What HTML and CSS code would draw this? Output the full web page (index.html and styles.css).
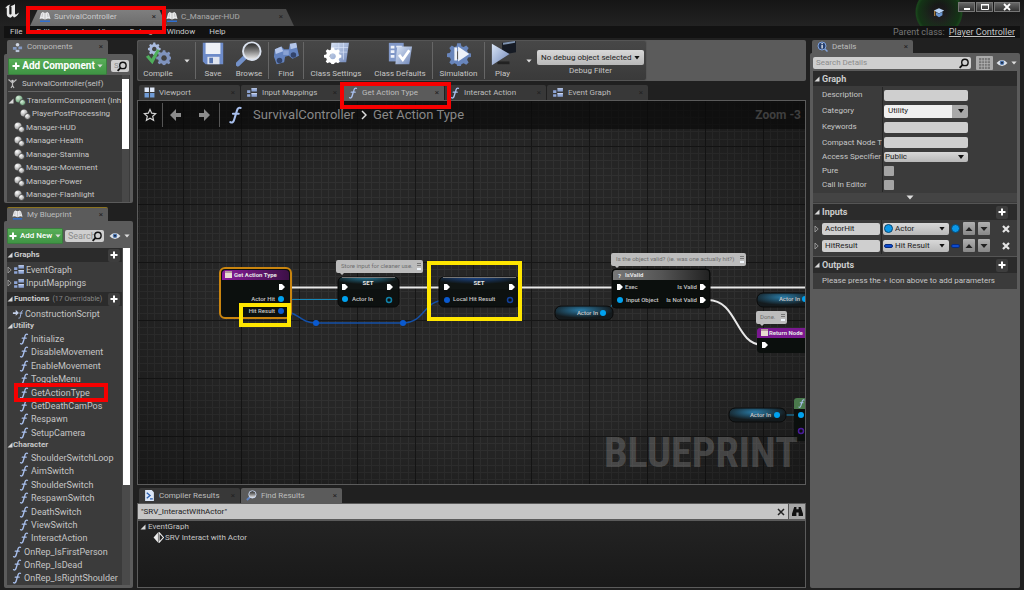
FILE: index.html
```html
<!DOCTYPE html>
<html lang="en">
<head>
<meta charset="utf-8">
<title>SurvivalController</title>
<link rel="stylesheet" href="styles.css">
</head>
<body>
<svg class="defs" aria-hidden="true">
  <defs>
    <linearGradient id="steel" x1="0" y1="0" x2="1" y2="1"><stop offset="0" stop-color="#dbe6f7"/><stop offset="1" stop-color="#6f86b8"/></linearGradient>
    <linearGradient id="lens" x1="0" y1="0" x2="0" y2="1"><stop offset="0" stop-color="#222"/><stop offset=".45" stop-color="#777"/><stop offset="1" stop-color="#f4f4f4"/></linearGradient>
    <radialGradient id="ball" cx=".35" cy=".3" r=".8"><stop offset="0" stop-color="#fff"/><stop offset="1" stop-color="#8b8b8b"/></radialGradient>
    <radialGradient id="greenball" cx=".35" cy=".3" r=".8"><stop offset="0" stop-color="#d9f0dd"/><stop offset="1" stop-color="#5d9a6c"/></radialGradient>
  </defs>
  <symbol id="i-book" viewBox="0 0 12 11"><path d="M1 9.500h10v1.500H1z" fill="#2f6fd0"/><path d="M2 2.500 3.500 1l2.500 1 2.500-1L10 2.500l1.500 5.500-2.500-.5-3 1-3-1L.5 8z" fill="#e9eaec"/><path d="M6 2v6M3.500 2.500 3 6M8.500 2.500 9 6" stroke="#aaa" stroke-width=".6"/></symbol>
  <symbol id="i-f" viewBox="0 0 10 14"><path d="M1 12.500c1.500.8 2.500 0 3-2L6 4c.5-2 1.500-3 3-2.500M3 6h4.500" fill="none" stroke="#a9c0ee" stroke-width="1.600" stroke-linecap="round"/></symbol>
  <symbol id="i-graph" viewBox="0 0 11 10"><path d="M5 1h5v3H5zM5 5.500h5v3.500H5zM1 3h3v2.500H1zM1 6.500h3V9H1z" fill="#8ea5d6"/><path d="M5 1h5v1H5zM5 5.500h5v1H5z" fill="#c6d3ee"/></symbol>
  <symbol id="i-view" viewBox="0 0 10 10"><path d="M.5.5h4v4h-4zM5.500.5h4v4h-4z" fill="#dfe8f8"/><path d="M.5 5.500h4v4h-4zM5.500 5.500h4v4h-4z" fill="#6f9bd6"/></symbol>
  <symbol id="i-comp" viewBox="0 0 11 11"><circle cx="4" cy="4" r="3.500" fill="url(#ball)"/><circle cx="7.500" cy="7.500" r="3" fill="url(#ball)" stroke="#3c3c3c" stroke-width=".8"/></symbol>
  <symbol id="i-trans" viewBox="0 0 11 11"><circle cx="4" cy="4" r="3.500" fill="url(#greenball)"/><circle cx="7.500" cy="7.500" r="3" fill="url(#greenball)" stroke="#3c3c3c" stroke-width=".8"/></symbol>
  <symbol id="i-self" viewBox="0 0 10 11"><circle cx="5" cy="3" r="1.300" fill="#ccc"/><path d="M1 1.500 5 5l4-3.500M5 5v2.500L3.500 10M5 7.500 6.500 10" stroke="#bbb" stroke-width="1.200" fill="none"/></symbol>
  <symbol id="i-parts" viewBox="0 0 12 11"><circle cx="6" cy="2.500" r="2" fill="#d0d6e2"/><path d="M1 5h4v3H1zM7 4.500h4v3H7z" fill="#8498c0"/><path d="M4 8h4v2.500H4z" fill="#b9c4d8"/></symbol>
  <symbol id="i-search" viewBox="0 0 12 12"><circle cx="7" cy="4.800" r="3.500" fill="none" stroke="#111" stroke-width="1.500"/><path d="M4.500 7.500 1.200 10.800" stroke="#111" stroke-width="2"/></symbol>
  <symbol id="i-eye" viewBox="0 0 12 8"><path d="M.5 4Q6-2 11.500 4 6 10 .5 4z" fill="#e2e6ec"/><circle cx="6" cy="3.800" r="2.300" fill="#5078b0"/><circle cx="6" cy="3.800" r="1" fill="#152238"/></symbol>
  <symbol id="i-plus" viewBox="0 0 8 8"><path d="M3 .5h2V3h2.500v2H5v2.500H3V5H.5V3H3z" fill="#fff"/></symbol>
  <symbol id="i-open" viewBox="0 0 6 6"><path d="M5.500.5v5H.5z" fill="#d8d8d8"/></symbol>
  <symbol id="i-closed" viewBox="0 0 5 8"><path d="M1 1v6l3.200-3z" fill="none" stroke="#aaa" stroke-width=".8"/></symbol>
  <symbol id="i-down" viewBox="0 0 8 5"><path d="M.5.500h7L4 4.500z" fill="currentColor"/></symbol>
  <symbol id="i-gear" viewBox="0 0 20 20"><path d="M8.500 1h3l.5 2.500 1.800.8L16 3l2 2-1.300 2.200.8 1.800 2.500.5v3l-2.500.5-.8 1.800L18 17l-2 2-2.200-1.300-1.800.8-.5 1.500h-3L8 18.500l-1.800-.8L4 19l-2-2 1.300-2.200-.8-1.800L0 12.500v-3L2.500 9l.8-1.800L2 5l2-2 2.200 1.300L8 3.500zM10 7.500a3.500 3.500 0 1 0 .01 0z" fill-rule="evenodd"/></symbol>
  <symbol id="i-glass" viewBox="0 0 12 12"><path d="M4.500 7.500 1 11" stroke="#5f84c4" stroke-width="2.200"/><circle cx="7" cy="4.800" r="4" fill="url(#lens)" stroke="#c6d4ee" stroke-width="1"/></symbol>
</svg>

<header class="titlebar">
  <svg class="logo" viewBox="0 0 16 16" aria-label="Engine logo"><path d="M1 5.500C2.500 3 4 2 6.500 1.500 5.500 2.500 5.300 3 5.300 4v6.500c0 1 1.200 1.500 2.200.5V4.500C7.500 3.500 7 3.400 6.500 3.200 8.500 2.600 9.800 2 11 1v9.500c0 1 .8 1.300 1.500.8L15 9.500c-1 3-3.500 4.500-5 5L8.700 13l-2 1.800C4 14.500 2.800 13 2.800 11V5.500C2.800 4.500 2 4.600 1 5.500z" fill="#e8e8e8"/></svg>
  <nav class="windows">
    <a class="wtab active" href="#"><svg class="ic12"><use href="#i-book"/></svg><span>SurvivalController</span><i class="x">×</i><b class="mark mark-window"></b></a>
    <a class="wtab" href="#"><svg class="ic12"><use href="#i-book"/></svg><span>C_Manager-HUD</span><i class="x">×</i></a>
  </nav>
  <div class="tutorial"><svg viewBox="0 0 14 14"><path d="M1 4 7 1.500 13 4 7 7.500z" fill="#b9d3f5"/><path d="M3.500 6v3.500L7 12l4-2.500V5.500L7 8z" fill="#6b96d0"/><path d="M2 4.500v6" stroke="#c89446" stroke-width="1.200"/></svg></div>
  <div class="winbtns">
    <button aria-label="Minimize"><svg viewBox="0 0 10 8"><path d="M2 5h6v2H2z" fill="#fff"/></svg></button>
    <button aria-label="Maximize"><svg viewBox="0 0 10 8"><path d="M1.500 1.500h7v5h-7z" fill="none" stroke="#fff"/><path d="M1 1h8v1.500H1z" fill="#fff"/></svg></button>
    <button class="wide" aria-label="Close"><svg viewBox="0 0 10 8"><path d="m2 1 6 6M8 1 2 7" stroke="#fff" stroke-width="1.800"/></svg></button>
  </div>
</header>

<nav class="menubar">
  <a href="#">File</a><a href="#">Edit</a><a href="#">Asset</a><a href="#">View</a><a href="#">Debug</a><a href="#">Window</a><a href="#">Help</a>
  <p>Parent class: <a href="#">Player Controller</a></p>
</nav>

<main>
  <aside class="left">
    <section class="dock components">
      <div class="tab lit"><svg class="ic10"><use href="#i-parts"/></svg><span>Components</span><i class="x">×</i></div>
      <div class="panel">
        <div class="tools">
          <button class="green big"><svg class="ic8"><use href="#i-plus"/></svg>Add Component<svg class="caret"><use href="#i-down"/></svg></button>
          <label class="search tiny"><input type="text" aria-label="Search components" placeholder="S"><svg class="ic12"><use href="#i-search"/></svg></label>
        </div>
        <div class="scroll">
          <div class="inner">
            <div class="self"><svg class="ic10"><use href="#i-self"/></svg>SurvivalController(self)</div>
            <ul class="tree">
              <li class="root"><svg class="ic6"><use href="#i-open"/></svg><svg class="ic10"><use href="#i-trans"/></svg>TransformComponent (Inh</li>
              <li class="child"><svg class="ic10"><use href="#i-comp"/></svg>PlayerPostProcessing</li>
              <li><svg class="ic10"><use href="#i-comp"/></svg>Manager-HUD</li>
              <li><svg class="ic10"><use href="#i-comp"/></svg>Manager-Health</li>
              <li><svg class="ic10"><use href="#i-comp"/></svg>Manager-Stamina</li>
              <li><svg class="ic10"><use href="#i-comp"/></svg>Manager-Movement</li>
              <li><svg class="ic10"><use href="#i-comp"/></svg>Manager-Power</li>
              <li><svg class="ic10"><use href="#i-comp"/></svg>Manager-Flashlight</li>
            </ul>
          </div>
          <div class="bar"><div class="thumb short"></div></div>
        </div>
      </div>
    </section>

    <section class="dock blueprint">
      <div class="tab lit gold"><svg class="ic10"><use href="#i-book"/></svg><span>My Blueprint</span><i class="x">×</i></div>
      <div class="panel">
        <div class="tools">
          <button class="green"><svg class="ic8"><use href="#i-plus"/></svg>Add New<svg class="caret"><use href="#i-down"/></svg></button>
          <label class="search small"><input type="text" aria-label="Search blueprint" placeholder="Search"><svg class="ic12"><use href="#i-search"/></svg></label>
          <button class="eye" aria-label="View options"><svg class="eyeic"><use href="#i-eye"/></svg><svg class="caret"><use href="#i-down"/></svg></button>
        </div>
        <div class="scroll">
          <div class="inner">
            <h3><svg class="ic6"><use href="#i-open"/></svg>Graphs<button aria-label="Add graph"><svg class="ic8"><use href="#i-plus"/></svg></button></h3>
            <ul class="list graphs">
              <li><svg class="closed"><use href="#i-closed"/></svg><svg class="ic12"><use href="#i-graph"/></svg>EventGraph</li>
              <li><svg class="closed"><use href="#i-closed"/></svg><svg class="ic12"><use href="#i-graph"/></svg>InputMappings</li>
            </ul>
            <h3><svg class="ic6"><use href="#i-open"/></svg>Functions<small>(17 Overridable)</small><button aria-label="Add function"><svg class="ic8"><use href="#i-plus"/></svg></button></h3>
            <ul class="list funcs">
              <li class="con"><svg class="conic" viewBox="0 0 13 12"><path d="M1 6V4h3V1.500L7.500 5 4 8V6z" fill="#c3cfe8"/><path d="M7 10.500c1 .5 1.500 0 2-1.500l1-5c.3-1.200 1-1.800 2-1.400M8 5h3.500" fill="none" stroke="#a9c0ee"/></svg>ConstructionScript</li>
              <li class="cat"><svg class="ic6"><use href="#i-open"/></svg>Utility</li>
              <li class="sub"><svg class="fn"><use href="#i-f"/></svg>Initialize</li>
              <li class="sub"><svg class="fn"><use href="#i-f"/></svg>DisableMovement</li>
              <li class="sub"><svg class="fn"><use href="#i-f"/></svg>EnableMovement</li>
              <li class="sub"><svg class="fn"><use href="#i-f"/></svg>ToggleMenu</li>
              <li class="sub marked"><svg class="fn"><use href="#i-f"/></svg>GetActionType<b class="mark mark-row"></b></li>
              <li class="sub"><svg class="fn"><use href="#i-f"/></svg>GetDeathCamPos</li>
              <li class="sub"><svg class="fn"><use href="#i-f"/></svg>Respawn</li>
              <li class="sub"><svg class="fn"><use href="#i-f"/></svg>SetupCamera</li>
              <li class="cat"><svg class="ic6"><use href="#i-open"/></svg>Character</li>
              <li class="sub"><svg class="fn"><use href="#i-f"/></svg>ShoulderSwitchLoop</li>
              <li class="sub"><svg class="fn"><use href="#i-f"/></svg>AimSwitch</li>
              <li class="sub"><svg class="fn"><use href="#i-f"/></svg>ShoulderSwitch</li>
              <li class="sub"><svg class="fn"><use href="#i-f"/></svg>RespawnSwitch</li>
              <li class="sub"><svg class="fn"><use href="#i-f"/></svg>DeathSwitch</li>
              <li class="sub"><svg class="fn"><use href="#i-f"/></svg>ViewSwitch</li>
              <li class="sub"><svg class="fn"><use href="#i-f"/></svg>InteractAction</li>
              <li class="top"><svg class="fn"><use href="#i-f"/></svg>OnRep_IsFirstPerson</li>
              <li class="top"><svg class="fn"><use href="#i-f"/></svg>OnRep_IsDead</li>
              <li class="top"><svg class="fn"><use href="#i-f"/></svg>OnRep_IsRightShoulder</li>
            </ul>
          </div>
          <div class="bar"><div class="thumb tall"></div></div>
        </div>
      </div>
    </section>
  </aside>

  <div class="center">
    <div class="toolstrip">
      <div class="toolbar">
        <button class="w40"><svg viewBox="0 0 28 28"><use href="#i-gear" x="3" y="1" width="14" height="14" fill="#a9bbdf"/><use href="#i-gear" x="12" y="9" width="17" height="17" fill="#7f93bd"/><path d="m1 17 3-2 3 4L13 9l3 1-8 15z" fill="#4fae5c"/></svg>Compile</button>
        <button class="drop" aria-label="Compile options"><svg class="caret"><use href="#i-down"/></svg></button>
        <i class="sep"></i>
        <button class="w34"><svg viewBox="0 0 28 28"><path d="M3 2h22v23H6l-3-3z" fill="#6d8bc9"/><path d="M6 2h16v12H6z" fill="#edf0f6"/><path d="M8 17h13v8H8z" fill="#dfe4ee"/><path d="M10 18h4v6h-4z" fill="#5673ad"/></svg>Save</button>
        <button class="w37"><svg viewBox="0 0 28 28"><path d="M10 17 2 25" stroke="#7391c9" stroke-width="5" stroke-linecap="round"/><circle cx="17" cy="11" r="9.500" fill="url(#lens)" stroke="#dbe2ee" stroke-width="2"/></svg>Browse</button>
        <i class="sep"></i>
        <button class="w34"><svg viewBox="0 0 28 28"><path d="m2 9 7-3 3 3h5l1-5 7-1 3 13-7 3-4-3-4 1-1 6-8 2-3-8z" fill="#6483bf"/><path d="m2 9 7-3 2 5-8 3zM18 3l7-1 1 5-7 2z" fill="#b4c6ea"/><path d="M11 10h6v5h-6z" fill="#89a2d4"/><circle cx="7" cy="21" r="3" fill="#33446b"/><circle cx="22" cy="15" r="3" fill="#33446b"/></svg>Find</button>
        <i class="sep"></i>
        <button class="w64"><svg viewBox="0 0 28 28"><path d="M9 2h19l-3 21H7z" fill="url(#steel)"/><path d="M12 7h15M12 12h14M17 2v18M22 2v18" stroke="#dae5fa" stroke-width=".7"/><use href="#i-gear" x="1" y="6" width="19" height="19" fill="#fff"/></svg>Class Settings</button>
        <button class="w64"><svg viewBox="0 0 28 28"><path d="M2 2h16v20H2z" fill="#8198c8"/><path d="M4 5h4v3H4zM4 10h4v3H4zM4 15h4v3H4zM10 5h6v2h-6z" fill="#eef2fa"/><path d="M11 6h16l-3 19H9z" fill="url(#steel)"/><path d="m13 15 4 5 7-10" fill="none" stroke="#fff" stroke-width="3"/></svg>Class Defaults</button>
        <i class="sep"></i>
        <button class="w51"><svg viewBox="0 0 28 28"><use href="#i-gear" x="1" y="1" width="26" height="26" fill="#6885bb"/><path d="M9 7h3v14H9zM13 6l12 8-12 8z" fill="#edf1f8"/></svg>Simulation</button>
        <i class="sep"></i>
        <button class="w35"><svg viewBox="0 0 28 28"><path d="M13 2 28 0v12l-15 3z" fill="#161b24"/><path d="m14 2 13-2v2L14 4z" fill="#7f93b0"/><path d="M8 22h13v3H8z" fill="#222"/><path d="M2 3v23l19-12z" fill="url(#steel)"/></svg>Play</button>
        <button class="drop" aria-label="Play options"><svg class="caret"><use href="#i-down"/></svg></button>
        <div class="debug">
          <span class="select"><select id="debug"><option>No debug object selected</option></select></span>
          <label for="debug">Debug Filter</label>
        </div>
      </div>
    </div>

    <div class="tabs doc">
      <div class="tab"><svg class="ic10"><use href="#i-view"/></svg><span>Viewport</span><i class="x">×</i></div>
      <div class="tab"><svg class="ic12"><use href="#i-graph"/></svg><span>Input Mappings</span><i class="x">×</i></div>
      <div class="tab lit"><svg class="fn"><use href="#i-f"/></svg><span>Get Action Type</span><i class="x">×</i><b class="mark mark-doc"></b></div>
      <div class="tab"><svg class="fn"><use href="#i-f"/></svg><span>Interact Action</span><i class="x">×</i></div>
      <div class="tab"><svg class="ic12"><use href="#i-graph"/></svg><span>Event Graph</span><i class="x">×</i></div>
    </div>

    <section class="graph">
      <svg class="canvas">
        <defs>
          <pattern id="grid" x="45" y="45" width="58" height="58" patternUnits="userSpaceOnUse">
            <path d="M7.500 0v58M14.500 0v58M22.500 0v58M29.500 0v58M36.500 0v58M43.500 0v58M51.500 0v58M0 7.500h58M0 14.500h58M0 22.500h58M0 29.500h58M0 36.500h58M0 43.500h58M0 51.500h58" stroke="#303030"/>
            <path d="M.5 0v58M0 .5h58" stroke="#161616"/>
          </pattern>
          <radialGradient id="vig" cx=".5" cy=".5" r=".75"><stop offset=".5" stop-opacity="0"/><stop offset="1" stop-opacity=".45"/></radialGradient>
          <linearGradient id="purple"><stop offset="0" stop-color="#8a1c9c"/><stop offset="1" stop-color="#3c1046"/></linearGradient>
          <linearGradient id="gray"><stop offset="0" stop-color="#777"/><stop offset=".5" stop-color="#555"/><stop offset="1" stop-color="#222"/></linearGradient>
          <radialGradient id="cyan" cx=".45" cy="0" r=".6"><stop offset="0" stop-color="#247a9c"/><stop offset="1" stop-color="#101514"/></radialGradient>
          <radialGradient id="blue" cx=".45" cy="0" r=".6"><stop offset="0" stop-color="#1c4a94"/><stop offset="1" stop-color="#101514"/></radialGradient>
          <radialGradient id="pill" cx=".45" cy=".3" r=".55"><stop offset="0" stop-color="#2a7ba6"/><stop offset="1" stop-color="#141a1d"/></radialGradient>
          <path id="exec" d="M0-3h3L6 0 3 3H0z" fill="#fff"/>
          <g id="grip"><path d="M0 0h4v1H0zM0 2h4v1H0z" fill="#777"/><path d="M0 5h4v2H0z" fill="#eef4fa"/></g>
          <g id="sheet"><path d="M0 0h7v7H0z" fill="#e8dccf"/><path d="M0 0h7v2H0z" fill="#b49a9f"/></g>
        </defs>
        <rect width="100%" height="100%" fill="url(#grid)"/>
        <rect width="100%" height="100%" fill="url(#vig)"/>
        <g transform="translate(-138 -101)" class="nodes">
          <g fill="none" stroke="#e8e8e8" stroke-width="2">
            <path d="M285 287.500h58M396 287.500h48M517 287.500h100M708 287.500h99M708 300c30 0 27 45 55 45"/>
          </g>
          <path d="M283 299.500h60M603 313c9 0 7-13 17-13M778 415h22" fill="none" stroke="#1687b8" stroke-width="1"/>
          <path d="M283 311c14 0 17 12 33 12h87c22 0 20-23 43-23" fill="none" stroke="#1450a8" stroke-width="1.500"/>
          <circle cx="316" cy="323" r="3" fill="#0a5ad0"/><circle cx="403" cy="323" r="3" fill="#0a5ad0"/>

          <rect x="220" y="268" width="71" height="50" rx="5" fill="#0c100e" stroke="#c98510" stroke-width="2"/>
          <path d="M222 280v-6q0-4 4-4h59q4 0 4 4v6z" fill="url(#purple)"/>
          <use href="#sheet" x="225" y="271"/><text class="b" x="234" y="277">Get Action Type</text>
          <use href="#exec" x="279" y="287"/>
          <text x="275" y="301" class="e">Actor Hit</text><circle cx="281" cy="299" r="3" fill="#00a2f0"/>
          <text x="275" y="313" class="e">Hit Result</text><circle cx="281" cy="311" r="3" fill="#0a5ad0"/>

          <path d="M338 260h83q2 0 2 2v9q0 2-2 2h-77l-2 2-2-2h-2q-2 0-2-2v-9q0-2 2-2z" class="note"/>
          <text class="n" x="341" y="268">Store input for cleaner use.</text><use href="#grip" x="417" y="263"/>
          <rect x="338" y="277" width="61" height="30" rx="5" fill="#0d1110" stroke="#090909"/><path d="M339 289v-7q0-5 5-5h49q5 0 5 5v7z" fill="url(#cyan)"/><path d="M342 277.500h53" stroke="#777"/>
          <text class="b m" x="368" y="285">SET</text>
          <use href="#exec" x="342" y="287"/><use href="#exec" x="387" y="287"/>
          <circle cx="345" cy="299" r="3" fill="#00a2f0"/><text x="352" y="301">Actor In</text><circle cx="389" cy="300" r="2.500" class="ring" stroke="#1183aa"/>

          <rect x="439" y="277" width="81" height="30" rx="5" fill="#0d1110" stroke="#090909"/><path d="M440 289v-7q0-5 5-5h69q5 0 5 5v7z" fill="url(#blue)"/><path d="M443 277.500h73" stroke="#777"/>
          <text class="b m" x="479" y="285">SET</text>
          <use href="#exec" x="444" y="287"/><use href="#exec" x="509" y="287"/>
          <circle cx="447" cy="300" r="3" fill="#0a5ad0"/><text x="453" y="301">Local Hit Result</text><circle cx="510" cy="300" r="2.500" class="ring" stroke="#12409a"/>

          <path d="M613 253h131q2 0 2 2v9q0 2-2 2H619l-2 2-2-2h-2q-2 0-2-2v-9q0-2 2-2z" class="note"/>
          <text class="n" x="616" y="261">Is the object valid? (ie. was one actually hit?)</text><use href="#grip" x="740" y="256"/>
          <rect x="612" y="269" width="98" height="39" rx="4" fill="#0b0f0d" stroke="#090909"/><path d="M613 280v-7q0-3 3-3h90q3 0 3 3v7z" fill="url(#gray)"/>
          <text class="b" x="618" y="278">?</text><text class="b" x="625" y="277">IsValid</text>
          <use href="#exec" x="617" y="287"/><text x="625" y="289">Exec</text><use href="#exec" x="700" y="287"/><text class="e" x="697" y="289">Is Valid</text>
          <circle cx="620" cy="300" r="3" fill="#00a2f0"/><text x="626" y="302">Input Object</text><use href="#exec" x="700" y="300"/><text class="e" x="697" y="302">Is Not Valid</text>

          <rect x="555" y="306" width="58" height="14" rx="6" class="pill"/><text class="e" x="598" y="315">Actor In</text><circle cx="603" cy="313" r="3" fill="#00a2f0"/>
          <rect x="757" y="293" width="58" height="14" rx="6" class="pill"/><text class="e" x="800" y="301">Actor In</text><circle cx="805" cy="299" r="3" fill="#00a2f0"/>

          <path d="M758 311h27q2 0 2 2v9q0 2-2 2h-21l-2 2-2-2h-2q-2 0-2-2v-9q0-2 2-2z" class="note"/>
          <text class="n" x="760" y="319">Done.</text><use href="#grip" x="781" y="314"/>
          <rect x="757" y="328" width="70" height="25" rx="4" fill="#0b0f0d"/><path d="M757 338v-7q0-3 3-3h60v10z" fill="#7a1890"/>
          <use href="#sheet" x="761" y="329"/><text class="b" x="769" y="335">Return Node</text><use href="#exec" x="762" y="345"/>

          <rect x="729" y="408" width="57" height="14" rx="6" class="pill"/><text class="e" x="771" y="417">Actor In</text><circle cx="777" cy="415" r="3" fill="#00a2f0"/>
          <rect x="794" y="398" width="40" height="43" rx="4" fill="#0b0f0d"/><path d="M794 409v-8q0-3 3-3h20v11z" fill="#4a7a4c"/><use href="#i-f" x="798" y="399" width="7" height="9"/>
          <circle cx="801" cy="415" r="3" fill="#00a2f0"/><circle cx="801" cy="431" r="2.500" class="ring" stroke="#4a1c9c"/>

          <rect x="241" y="305" width="48" height="20" class="box"/>
          <rect x="429" y="263" width="91" height="56" class="box"/>
        </g>
      </svg>
      <div class="crumbs">
        <button aria-label="Favorite"><svg class="ic14" viewBox="0 0 14 14"><path d="m7 1.500 1.700 3.700 4 .4-3 2.700.9 4L7 10.200 3.400 12.300l.9-4-3-2.700 4-.4z" fill="none" stroke="#d5d5d5" stroke-width="1.200"/></svg></button>
        <i class="vsep"></i>
        <button aria-label="Back"><svg class="ic14" viewBox="0 0 14 14"><path d="m1 7 6-6v4h5v4H7v4z" fill="#8c8c8c"/></svg></button>
        <button aria-label="Forward"><svg class="ic14" viewBox="0 0 14 14"><path d="M13 7 7 1v4H2v4h5v4z" fill="#8c8c8c"/></svg></button>
        <i class="vsep second"></i>
        <svg class="bigf"><use href="#i-f"/></svg>
        <a href="#">SurvivalController</a><svg class="chev" viewBox="0 0 6 10"><path d="m1 1 4 4-4 4" fill="none" stroke="#ddd" stroke-width="1.500"/></svg><a href="#">Get Action Type</a>
        <strong>Zoom -3</strong>
      </div>
      <div class="watermark">BLUEPRINT</div>
    </section>

    <div class="tabs low">
      <div class="tab"><svg class="ic10" viewBox="0 0 10 10"><path d="M1 0h6l2 2v8H1z" fill="#dce7f8"/><path d="m2.500 2.500 3 2.500-3 2.500M5.500 8H8" fill="none" stroke="#2b5fae" stroke-width="1.200"/></svg><span>Compiler Results</span><i class="x">×</i></div>
      <div class="tab lit"><svg class="ic10"><use href="#i-glass"/></svg><span>Find Results</span><i class="x">×</i></div>
    </div>
    <section class="find">
      <div class="findbar">
        <input type="text" aria-label="Find in blueprint" value='"SRV_InteractWithActor"'>
        <button aria-label="Clear"><svg class="ic8" viewBox="0 0 8 8"><path d="m1 1 6 6M7 1 1 7" stroke="#222" stroke-width="1.500"/></svg></button>
        <button class="bino" aria-label="Find in all blueprints"><svg class="ic10" viewBox="0 0 10 10"><path d="M2 1h2v2h2V1h2l2 6v2H6V6H4v3H0V7z" fill="#111"/></svg></button>
      </div>
      <ul class="results">
        <li><svg class="ic6"><use href="#i-open"/></svg>EventGraph</li>
        <li class="hit"><svg class="ic10" viewBox="0 0 10 10"><path d="M4.500.5v9L.5 5z" fill="#eee"/><path d="M5.500.5v9l4-4.500z" fill="none" stroke="#eee"/></svg>SRV Interact with Actor</li>
      </ul>
    </section>
  </div>

  <aside class="right">
    <section class="dock details">
      <div class="tab lit"><svg class="ic10" viewBox="0 0 11 11"><circle cx="5" cy="5" r="4" fill="#27406e" stroke="#7fa2dc"/><path d="M4.500 2h1.200v1.200H4.500zM4.500 4h1.200v3.500H4.500z" fill="#fff"/><path d="m8 8 2.500 2.500" stroke="#7fa2dc" stroke-width="1.500"/></svg><span>Details</span><i class="x">×</i></div>
      <div class="panel">
        <div class="tools">
          <label class="search"><input type="text" aria-label="Search details" placeholder="Search Details"><svg class="ic12"><use href="#i-search"/></svg></label>
          <button class="matrix" aria-label="Property matrix"><svg viewBox="0 0 10 10" class="ic10"><path d="M0 0h10v10H0z" fill="#777"/><path d="M2.500 0v10M5 0v10M7.500 0v10M0 2.500h10M0 5h10M0 7.500h10" stroke="#bbb" stroke-width=".6"/></svg></button>
          <button class="eye" aria-label="View options"><svg class="eyeic"><use href="#i-eye"/></svg><svg class="caret"><use href="#i-down"/></svg></button>
        </div>
        <div class="props">
          <h3><svg class="ic6"><use href="#i-open"/></svg>Graph</h3>
          <div class="form">
            <label for="desc">Description</label><div><input id="desc" type="text"></div>
            <label for="cat">Category</label><div><span class="select boxed"><select id="cat"><option>Utility</option></select></span></div>
            <label for="key">Keywords</label><div><input id="key" type="text"></div>
            <label for="cmp">Compact Node T</label><div><input id="cmp" type="text"></div>
            <label for="acc">Access Specifier</label><div><span class="select thin"><select id="acc"><option>Public</option></select></span></div>
            <label for="pure">Pure</label><div><input id="pure" type="checkbox"></div>
            <label for="cie">Call In Editor</label><div><input id="cie" type="checkbox"></div>
          </div>
          <button class="more" aria-label="Show advanced"><svg class="caret"><use href="#i-down"/></svg></button>
          <h3><svg class="ic6"><use href="#i-open"/></svg>Inputs<button aria-label="Add input"><svg class="ic8"><use href="#i-plus"/></svg></button></h3>
          <div class="param">
            <svg class="closed"><use href="#i-closed"/></svg><input type="text" aria-label="Input name" value="ActorHit"><i class="split"></i>
            <span class="select typed"><i class="dot"></i><select aria-label="Type of ActorHit"><option>Actor</option></select></span><i class="dot"></i>
            <button class="mv" aria-label="Move up"><svg class="tri up"><use href="#i-down"/></svg></button><button class="mv" aria-label="Move down"><svg class="tri"><use href="#i-down"/></svg></button>
            <button class="del" aria-label="Remove"><svg class="ic8" viewBox="0 0 8 8"><path d="m1 1 6 6M7 1 1 7" stroke="#e4e4e4" stroke-width="2.200"/></svg></button>
          </div>
          <div class="param">
            <svg class="closed"><use href="#i-closed"/></svg><input type="text" aria-label="Input name" value="HitResult"><i class="split"></i>
            <span class="select typed"><i class="dash"></i><select aria-label="Type of HitResult"><option>Hit Result</option></select></span><i class="dash"></i>
            <button class="mv" aria-label="Move up"><svg class="tri up"><use href="#i-down"/></svg></button><button class="mv" aria-label="Move down"><svg class="tri"><use href="#i-down"/></svg></button>
            <button class="del" aria-label="Remove"><svg class="ic8" viewBox="0 0 8 8"><path d="m1 1 6 6M7 1 1 7" stroke="#e4e4e4" stroke-width="2.200"/></svg></button>
          </div>
          <h3 class="gap"><svg class="ic6"><use href="#i-open"/></svg>Outputs<button aria-label="Add output"><svg class="ic8"><use href="#i-plus"/></svg></button></h3>
          <p class="hint">Please press the + icon above to add parameters</p>
        </div>
      </div>
    </section>
  </aside>
</main>
</body>
</html>
```

FILE: styles.css
```css
* { box-sizing: border-box; margin: 0; padding: 0; }
html, body { height: 100%; }
body { display: flex; flex-direction: column; background: #202020; color: #c6c6c6; font: 8px/12px Roboto, "Liberation Sans", sans-serif; overflow: hidden; }
.defs { position: absolute; width: 0; height: 0; }
ul { list-style: none; }
a { color: inherit; text-decoration: none; }
i { font-style: normal; }
svg { flex: none; }
button, input, select { font: inherit; color: inherit; border: 0; background: none; }
button { display: flex; align-items: center; justify-content: center; }
input[type="text"] { min-width: 0; background: #cfcfcf; color: #222; border-radius: 2px; padding: 0 3px; }
input::placeholder { color: #8c8c8c; }

.ic6 { width: 6px; height: 6px; }
.ic8 { width: 8px; height: 8px; }
.ic10 { width: 11px; height: 11px; }
.ic12 { width: 12px; height: 11px; }
.ic14 { width: 14px; height: 14px; }
.fn { width: 10px; height: 12px; }
.caret { width: 6px; height: 4px; color: #ddd; }
.eyeic { width: 12px; height: 8px; }
.closed { width: 5px; height: 8px; }
.mark { position: absolute; border: 4px solid #f60000; z-index: 5; }

/* Title bar */
.titlebar { display: flex; height: 26px; padding: 0 3px 0 4px; background: linear-gradient(#151515, #222); }
.logo { width: 16px; height: 16px; margin-top: 3px; }
.windows { display: flex; margin: 9px auto 0 10px; }
.wtab { position: relative; display: flex; align-items: center; width: 137px; height: 17px; padding: 0 11px 2px 9px; gap: 3px; color: #aaa; margin-right: -10px; isolation: isolate; }
.wtab::before { content: ""; position: absolute; inset: 0; background: #4a4a4a; clip-path: polygon(0 100%, 8px 0, 129px 0, 100% 100%); z-index: -1; }
.wtab.active { z-index: 1; color: #ccc; }
.wtab.active::before { background: linear-gradient(#808080, #6c6c6c); }
.x { margin-left: auto; color: #222; font-size: 8px; }
.mark-window { inset: -3px 1px -8px -4px; }
.tutorial { display: flex; justify-content: center; width: 48px; margin-right: 9px; background: radial-gradient(circle 24px at 24px 12px, transparent 30%, #143416 85%, #1a461c 95%, transparent 100%); }
.tutorial svg { width: 12px; height: 12px; margin-top: 7px; }
.winbtns { display: flex; gap: 1px; margin: 2px 1px 0 -14px; }
.winbtns button { width: 17px; height: 10px; background: linear-gradient(#666, #333); border: 1px solid #777; }
.winbtns .wide { width: 26px; }
.winbtns svg { width: 10px; height: 8px; }

/* Menu */
.menubar { display: flex; align-items: center; height: 12px; margin: 0 4px; padding: 0 5px 0 6px; background: #121212; }
.menubar > a { margin-right: 14px; color: #ccc; }
.menubar p { margin-left: auto; font-size: 9px; color: #777; }
.menubar p a { color: #c4c4c4; text-decoration: underline; margin-left: 2px; }

/* Frame */
main { display: flex; flex: 1; min-height: 0; gap: 4px; padding: 2px 4px 2px; }
.left { display: flex; flex-direction: column; flex: 0 0 129px; gap: 4px; min-width: 0; min-height: 0; }
.right { display: flex; flex: 0 0 210px; min-width: 0; }
.center { display: flex; flex-direction: column; flex: 1; min-width: 0; }
.dock { display: flex; flex-direction: column; flex: 1; min-width: 0; min-height: 0; }
.dock > .panel { display: flex; flex-direction: column; flex: 1; min-height: 0; padding: 3px; background: #5b5b5b; border-radius: 2px; }
.left .components { flex: 0 0 163px; }
.components > .panel { padding-bottom: 1px; }
.tab { position: relative; display: flex; align-items: center; gap: 4px; height: 14px; width: 101px; padding: 0 5px; background: #383838; border-radius: 2px 2px 0 0; color: #bdbdbd; white-space: nowrap; }
.dock > .tab { margin-left: 3px; }
.tab.lit { background: #5b5b5b; }
.tab.gold { border-top: 1px solid #8c7420; }
.tools { display: flex; align-items: center; }
.green { flex: none; gap: 2px; background: linear-gradient(#58ae58, #3f9444); color: #fff; border: 1px solid #3a7d3e; border-radius: 1px; font-weight: 500; white-space: nowrap; }
.search { position: relative; display: flex; flex: 1; min-width: 0; }
.search input { width: 100%; height: 12px; }
.search svg { position: absolute; right: 1px; top: 1px; }
.eye { gap: 3px; }
.scroll { display: flex; flex: 1; min-height: 0; }
.inner { display: flex; flex-direction: column; flex: 1; min-width: 0; background: #3b3b3b; }
.bar { flex: 0 0 8px; padding: 0 0 0 1px; background: #4a4a4a; }
.thumb { background: #fff; }

/* Components */
.components .tools { gap: 4px; padding: 0 1px; height: 18px; }
.big { width: 99px; height: 17px; font-size: 10px; font-weight: 700; }
.components .scroll { background: #3b3b3b; }
.components .bar { padding: 4px 0 0; flex-basis: 7px; background: #484848; margin-right: 1px; }
.short { height: 70px; }
.components .inner { padding-top: 1px; }
.self { display: flex; align-items: center; gap: 4px; height: 15px; }
.tree { display: flex; flex-direction: column; flex: 1; margin: 0 0 0 1px; border-top: 1px solid #666; padding: 2px 0 0; }
.tree li { display: flex; flex: 1; align-items: center; gap: 1px; padding-left: 6px; white-space: nowrap; }
.tree .root { padding-left: 0; }
.tree .child { padding-left: 12px; }

/* My Blueprint */
.blueprint .tools { gap: 2px; height: 24px; padding-right: 3px; }
.blueprint .green { width: 56px; height: 16px; gap: 3px; }
.small { flex: 0 0 39px; }
.small input { height: 12px; font-size: 9px; }
.blueprint .eye { margin-left: 3px; }
h3 { display: flex; align-items: center; flex: none; gap: 1px; height: 14px; font-size: 9px; font-weight: 700; background: #2b2b2b; color: #ccc; }
.blueprint h3 { padding-right: 2px; font-size: 8px; }
h3 small { font-size: 7px; font-weight: 400; color: #888; margin-left: 2px; white-space: nowrap; }
h3 button { margin-left: auto; width: 12px; height: 13px; background: #3d3d3d; border-radius: 2px; }
.list { display: flex; flex-direction: column; font-size: 9px; }
.list li { position: relative; display: flex; align-items: center; flex: 1; white-space: nowrap; }
.graphs { flex: 0 0 30px; padding: 1px 0 2px; }
.graphs li { gap: 1px; }
.funcs { flex: 1; padding-top: 1px; }
.funcs .cat { flex: 0 0 12px; font-weight: 700; font-size: 8px; }
.funcs .con { padding-left: 5px; gap: 1px; }
.conic { width: 12px; height: 12px; }
.funcs .sub { padding-left: 12px; gap: 2px; }
.funcs .top { padding-left: 5px; gap: 2px; }
.tall { height: 237px; }
.list .mark-row { inset: -3px 14px -3px 7px; }

/* Toolbar */
.toolstrip { display: flex; background: #5b5b5b; height: 41px; border-radius: 2px; }
.toolbar { display: flex; align-items: center; background: linear-gradient(#474747, #3a3a3a); border: 1px solid #555; border-radius: 3px; padding-right: 2px; }
.toolbar > button { flex-direction: column; height: 39px; gap: 1px; white-space: nowrap; }
.toolbar > button > svg:not(.caret) { width: 26px; height: 26px; }
.toolbar > button.drop { width: 17px; }
.sep { width: 1px; height: 37px; background: #666; }
.w34 { width: 34px; }
.w35 { width: 35px; }
.w37 { width: 38px; }
.w40 { width: 40px; }
.w51 { width: 51px; }
.w64 { width: 64px; }
.debug { display: flex; flex-direction: column; align-items: center; width: 107px; padding-top: 6px; }
.select { position: relative; display: flex; align-items: center; width: 100%; }
.select::after { content: ""; position: absolute; right: 4px; width: 6px; height: 4px; background: #111; clip-path: polygon(0 0, 100% 0, 50% 100%); pointer-events: none; }
.select select { appearance: none; width: 100%; height: 15px; padding: 0 12px 0 4px; background: linear-gradient(#d8d8d8, #b8b8b8); color: #222; border-radius: 2px; }

/* Document tabs */
.tabs { display: flex; gap: 1px; padding-left: 2px; }
.doc { margin-top: 4px; }
.doc .tab { height: 15px; }
.mark-doc { inset: -3px -7px -9px -3px; }

/* Graph */
.graph { position: relative; flex: 1; min-height: 0; border: 1px solid #5b5b5b; background: #262626; }
.canvas { position: absolute; width: 100%; height: 100%; display: block; }
.nodes text { font-size: 6px; fill: #c8c8c8; font-weight: 500; }
.nodes .b { font-weight: 700; fill: #e4e4e4; }
.nodes .e { text-anchor: end; }
.nodes .m { text-anchor: middle; }
.nodes .n { fill: #6e6e6e; font-weight: 400; }
.note { fill: #bcbcbc; }
.ring { fill: none; stroke-width: 1.5px; }
.pill { fill: url(#pill); stroke: #0a0a0a; }
.box { fill: none; stroke: #ffe600; stroke-width: 4px; }
.crumbs { position: relative; display: flex; align-items: center; height: 28px; padding: 0 4px 0 5px; background: rgba(10, 10, 10, .7); font-size: 13px; color: #888; white-space: nowrap; }
.vsep { width: 1px; height: 24px; margin: 0 6px 0 5px; background: #555; }
.vsep.second { margin: 0 5px 0 8px; }
.crumbs button + button { margin-left: 14px; }
.bigf { width: 15px; height: 18px; margin: 0 10px 0 3px; }
.chev { width: 6px; height: 10px; margin: 0 6px; }
.crumbs strong { margin-left: auto; font-size: 12px; color: #3f3f3f; }
.watermark { position: absolute; right: 7px; bottom: 8px; font: 700 42px/46px "Roboto Condensed", "Liberation Sans Narrow", Roboto, sans-serif; color: rgba(170, 170, 170, .3); }

/* Find results */
.low { margin-top: 3px; }
.low .tab { height: 15px; }
.find { display: flex; flex-direction: column; flex: 0 0 85px; padding: 1px; background: #5b5b5b; }
.findbar { display: flex; height: 15px; background: #c6c6c6; margin-bottom: 2px; }
.findbar input[type="text"] { flex: 1; background: none; }
.findbar button { width: 14px; }
.findbar .bino { width: 17px; border-left: 1px solid #555; background: #a8a8a8; }
.results { flex: 1; background: linear-gradient(#232323, #191919); padding: 0 2px; }
.results li { display: flex; align-items: center; height: 11px; gap: 2px; }
.results .hit { padding-left: 13px; gap: 1px; }

/* Details */
.details .tab { margin-left: 2px; height: 13px; }
.details .tools { gap: 5px; height: 14px; margin-bottom: 1px; }
.details .search { flex: 0 0 158px; }
.matrix { width: 18px; height: 14px; background: #aaa; border-radius: 1px; }
.details .eye { margin-left: -2px; }
.props { background: #3b3b3b; }
.props h3 { height: 15px; padding: 0 9px 0 1px; gap: 2px; }
.form { display: grid; grid-template-columns: 69px 1fr; grid-template-rows: 16px 16px 16px 15px 14px 14px 14px; align-items: center; margin: 1px 0; }
.form label { padding-left: 9px; white-space: nowrap; }
.form > div { display: flex; align-items: center; height: 100%; border-left: 1px solid #262626; padding-left: 1px; }
.form input[type="text"] { width: 84px; height: 11px; }
.form .select { width: 84px; }
.form .boxed select { height: 13px; background: linear-gradient(90deg, #f0f0f0 68px, #a8a8a8 68px); }
.form .thin select { height: 10px; line-height: 10px; padding-left: 1px; }
.form input[type="checkbox"] { appearance: none; width: 10px; height: 10px; background: #a4a4a4; border-radius: 1px; }
.more { width: 100%; height: 9px; margin-bottom: 1px; background: #444; padding-right: 10px; }
.more .caret { width: 8px; height: 5px; }
.props h3 ~ h3 { border-top: 1px solid #555; height: 17px; }
.props h3.gap { margin-top: 2px; }
.param { display: flex; align-items: center; height: 17px; padding-left: 1px; }
.param input { width: 58px; height: 12px; margin-left: 3px; }
.split { align-self: stretch; width: 1px; background: #262626; margin: 0 1px; }
.typed { width: 66px; margin-right: 2px; }
.typed .dot, .typed .dash { position: absolute; left: 1px; }
.typed select { height: 12px; line-height: 12px; padding-left: 12px; }
.dot { width: 9px; height: 9px; border-radius: 50%; background: #0a97e8; border: 1px solid #0a4870; }
.dash { width: 9px; height: 4px; border-radius: 2px; background: #0d4bd0; border: 1px solid #082c7c; }
.mv { width: 12px; height: 13px; margin-left: 3px; background: linear-gradient(#b0b0b0, #888); border-radius: 1px; }
.tri { width: 8px; height: 6px; color: #222; }
.up { transform: rotate(180deg); }
.del { margin-left: 12px; }
.hint { padding: 2px 9px 2px; }
```
